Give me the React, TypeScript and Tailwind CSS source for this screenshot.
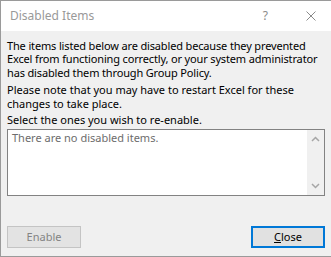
import React from 'react';

const font = { fontFamily: '"Noto Sans", "Open Sans", sans-serif' };

const ScrollArrow = ({ dir }: { dir: 'up' | 'down' }) => (
  <svg width="9" height="6" viewBox="0 0 9 6" className="block">
    <path
      d={dir === 'up' ? 'M1 5 L4.5 1.5 L8 5' : 'M1 1 L4.5 4.5 L8 1'}
      fill="none"
      stroke="#a6a6a6"
      strokeWidth="1.5"
    />
  </svg>
);

const App: React.FC = () => {
  return (
    <div
      className="w-[331px] h-[257px] bg-[#f0f0f0] border-l border-t border-b border-[#9a9a9a] flex flex-col text-black overflow-hidden"
      style={font}
    >
      {/* Title bar */}
      <div className="h-[30px] bg-white flex items-center shrink-0">
        <span className="ml-[9px] text-[12px] text-[#999999] flex-1">Disabled Items</span>
        <span className="text-[12px] text-[#8a8a8a] mr-[38px]">?</span>
        <svg width="10" height="10" viewBox="0 0 10 10" className="mr-[15px]">
          <path d="M0.5 0.5 L9.5 9.5 M9.5 0.5 L0.5 9.5" stroke="#8a8a8a" strokeWidth="1" />
        </svg>
      </div>

      {/* Body */}
      <div className="flex-1 flex flex-col px-[6px] pt-[8px] text-[11px] leading-[13.4px]">
        <p className="whitespace-nowrap tracking-[-0.15px]">
          The items listed below are disabled because they prevented
          <br />
          Excel from functioning correctly, or your system administrator
          <br />
          has disabled them through Group Policy.
        </p>
        <p className="mt-[4px] whitespace-nowrap">
          Please note that you may have to restart Excel for these
          <br />
          changes to take place.
        </p>
        <p className="mt-[3px]">Select the ones you wish to re-enable.</p>

        <div className="mt-[3px] h-[67px] border border-[#828282] bg-white flex">
          <div className="flex-1 pl-[4px] pt-[1px] text-[#6d6d6d]">There are no disabled items.</div>
          <div className="w-[17px] bg-[#f0f0f0] flex flex-col items-center justify-between py-[6px]">
            <ScrollArrow dir="up" />
            <ScrollArrow dir="down" />
          </div>
        </div>

        <div className="mt-auto mb-[8px] flex justify-between">
          <button className="w-[74px] h-[22px] bg-[#e3e3e3] border border-[#c4c4c4] text-[#838383] text-[11px]">
            Enable
          </button>
          <button className="w-[74px] h-[22px] bg-[#e1e1e1] border-2 border-[#0078d7] text-black text-[11px]">
            <span className="underline">C</span>lose
          </button>
        </div>
      </div>
    </div>
  );
};

export default App;
